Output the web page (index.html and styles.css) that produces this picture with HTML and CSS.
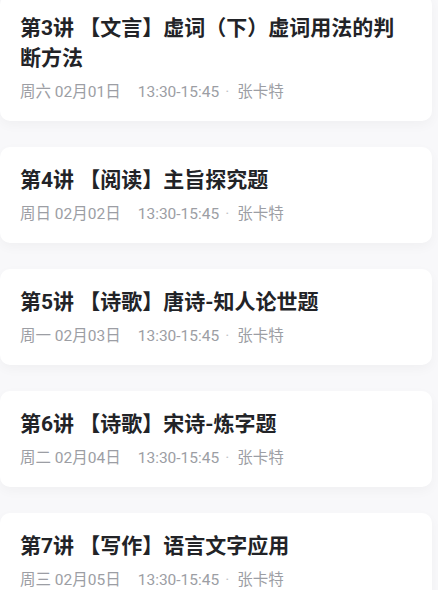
FILE: index.html
```html
<!DOCTYPE html>
<html lang="zh-CN">
<head>
<meta charset="utf-8">
<link rel="stylesheet" href="styles.css">
</head>
<body>
<div class="list">
  <div class="card first">
    <div class="title">第3讲 【文言】虚词（下）虚词用法的判断方法</div>
    <div class="meta"><span class="date">周六 02月01日</span><span class="time">13:30-15:45</span><span class="dot">·</span><span class="teacher">张卡特</span></div>
  </div>
  <div class="card">
    <div class="title">第4讲 【阅读】主旨探究题</div>
    <div class="meta"><span class="date">周日 02月02日</span><span class="time">13:30-15:45</span><span class="dot">·</span><span class="teacher">张卡特</span></div>
  </div>
  <div class="card">
    <div class="title">第5讲 【诗歌】唐诗-知人论世题</div>
    <div class="meta"><span class="date">周一 02月03日</span><span class="time">13:30-15:45</span><span class="dot">·</span><span class="teacher">张卡特</span></div>
  </div>
  <div class="card">
    <div class="title">第6讲 【诗歌】宋诗-炼字题</div>
    <div class="meta"><span class="date">周二 02月04日</span><span class="time">13:30-15:45</span><span class="dot">·</span><span class="teacher">张卡特</span></div>
  </div>
  <div class="card">
    <div class="title">第7讲 【写作】语言文字应用</div>
    <div class="meta"><span class="date">周三 02月05日</span><span class="time">13:30-15:45</span><span class="dot">·</span><span class="teacher">张卡特</span></div>
  </div>
</div>
</body>
</html>
```
FILE: styles.css
```css
html, body {
  margin: 0;
  padding: 0;
  background: #f8f8fa;
  overflow: hidden;
}
body {
  font-family: Roboto, "Noto Sans CJK SC", sans-serif;
}
.list {
  display: flex;
  flex-direction: column;
  gap: 26px;
  width: 432px;
  margin-top: -5px;
}
.card {
  background: #ffffff;
  border-radius: 10px;
  padding: 18px 20px;
  box-shadow: 0 4px 12px rgba(0, 0, 0, 0.035);
}
.title {
  font-size: 21px;
  line-height: 30px;
  font-weight: 700;
  color: #222327;
}
.meta {
  margin-top: 8px;
  font-size: 15.5px;
  line-height: 22px;
  color: #9c9ea4;
  display: flex;
  align-items: center;
  white-space: nowrap;
}
.time {
  margin-left: 17px;
}
.dot {
  margin: 0 8px 0 6px;
  color: #c2c4c8;
}
```
